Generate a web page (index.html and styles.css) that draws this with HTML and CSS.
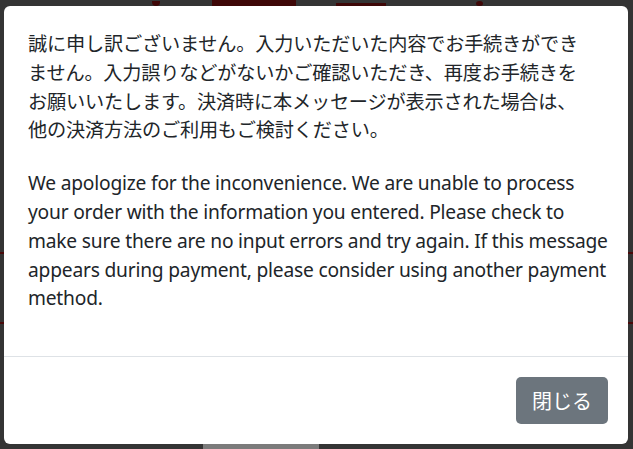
FILE: index.html
```html
<!DOCTYPE html>
<html>
<head>
  <title>ご注文エラー</title>
  <link rel="stylesheet" href="styles.css">
</head>
<body>
  <div id="page">
    <div class="page-head">
      <span class="head-mark mark-logo"></span>
      <span class="head-mark mark-title"></span>
      <span class="head-mark mark-sub"></span>
      <span class="head-mark mark-dot"></span>
    </div>
    <div class="page-rule rule-first"></div>
    <div class="page-rule rule-second"></div>
    <div class="page-bar"></div>
  </div>

  <div id="error-modal" class="modal">
    <div class="modal-content">
      <div class="modal-body">
        <p>誠に申し訳ございません。入力いただいた内容でお手続きができ<br>ません。入力誤りなどがないかご確認いただき、再度お手続きを<br>お願いいたします。決済時に本メッセージが表示された場合は、<br>他の決済方法のご利用もご検討ください。</p>
        <p>We apologize for the inconvenience. We are unable to process your order with the information you entered. Please check to make sure there are no input errors and try again. If this message appears during payment, please consider using another payment method.</p>
      </div>
      <div class="modal-footer">
        <button type="button" id="close-button">閉じる</button>
      </div>
    </div>
  </div>

  <script>
    const modal = document.getElementById('error-modal');
    const closeButton = document.getElementById('close-button');

    // Hide the dialog when the user closes it
    closeButton.addEventListener('click', () => {
      modal.style.display = 'none';
    });
  </script>
</body>
</html>
```

FILE: styles.css
```css
body {
  margin: 0;
  height: 100vh;
  overflow: hidden;
  background-color: #343434;
  font-family: "Noto Sans", "Noto Sans CJK JP", sans-serif;
}

.page-head {
  display: flex;
  align-items: flex-end;
  height: 6px;
  padding-left: 152px;
}

.head-mark {
  height: 6px;
  background-color: #3e0707;
}

.mark-logo {
  width: 8px;
  height: 5px;
  border-radius: 0 0 4px 4px;
}

.mark-title {
  width: 84px;
  margin-left: 52px;
}

.mark-sub {
  width: 50px;
  height: 3px;
  margin-left: 40px;
}

.mark-dot {
  width: 7px;
  height: 5px;
  margin-left: 90px;
  border-radius: 50%;
}

.page-rule {
  height: 2px;
  background-color: #4a0909;
}

.rule-first {
  margin-top: 246px;
}

.rule-second {
  margin-top: 68px;
}

.page-bar {
  margin: 119px 0 0 203px;
  width: 116px;
  height: 6px;
  background-color: #7b7b7b;
}

.modal {
  position: fixed;
  top: 0;
  left: 0;
  right: 0;
  bottom: 0;
  display: flex;
  align-items: flex-start;
  padding: 6px 0 0 4px;
}

.modal-content {
  width: 624px;
  height: 438px;
  display: flex;
  flex-direction: column;
  background-color: #fff;
  border-radius: 6px;
}

.modal-body {
  flex: 1;
  padding: 24px 20px 0 24px;
  font-size: 19.2px;
  line-height: 1.5;
  letter-spacing: -0.2px;
  color: #212529;
}

.modal-body p {
  margin: 0 0 24px 0;
}

.modal-footer {
  display: flex;
  justify-content: flex-end;
  padding: 20px;
  border-top: 1px solid #dee2e6;
}

#close-button {
  height: 47px;
  padding: 0 16px;
  background-color: #6c757d;
  color: #fff;
  border: none;
  border-radius: 5px;
  font-family: "Noto Sans CJK JP", sans-serif;
  font-size: 20px;
  cursor: pointer;
}
```
